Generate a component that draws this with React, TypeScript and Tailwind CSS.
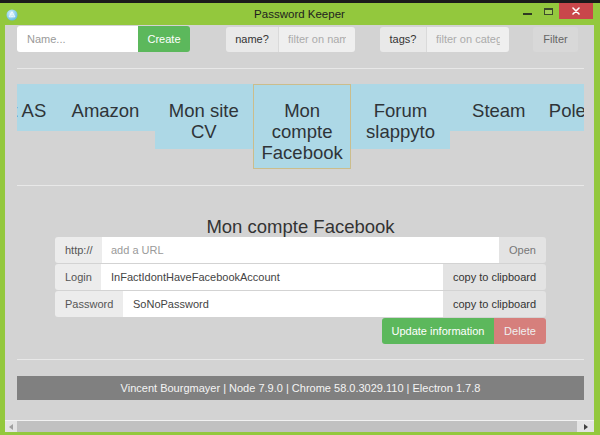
import React from 'react';

const tabs = ['Crédit AS', 'Amazon', 'Mon site CV', 'Mon compte Facebook', 'Forum slappyto', 'Steam', 'Pole emploi'];
const selected = 'Mon compte Facebook';

const WindowIcon = () => (
  <svg width="12" height="12" viewBox="0 0 12 12">
    <defs>
      <radialGradient id="ico" cx="40%" cy="35%" r="70%">
        <stop offset="0%" stopColor="#d8f3ff" />
        <stop offset="100%" stopColor="#5fb8e0" />
      </radialGradient>
    </defs>
    <circle cx="6" cy="6" r="5.5" fill="url(#ico)" />
    <path d="M6 2.6 L8.9 7.8 L3.1 7.8 Z" fill="none" stroke="#ffffff" strokeWidth="0.9" opacity="0.85" />
    <circle cx="6" cy="6.2" r="1.2" fill="none" stroke="#ffffff" strokeWidth="0.7" opacity="0.85" />
  </svg>
);

export default function App() {
  return (
    <div className="w-[600px] h-[435px] flex flex-col bg-[#1b1b1b] font-['Liberation_Sans',Arial,sans-serif] overflow-hidden">
      <div className="h-[3px] shrink-0" />

      {/* window */}
      <div className="flex-1 flex flex-col bg-[#93c83d] pl-[5px] pr-[6px] pb-[3px] min-h-0">
        {/* title bar */}
        <div className="h-[22px] shrink-0 grid grid-cols-[1fr_auto_1fr] items-center">
          <div className="flex items-center pl-[1px] pt-[1px]">
            <WindowIcon />
          </div>
          <div className="text-[11.5px] text-[#1e1e1e] pt-[1px]">Password Keeper</div>
          <div className="flex items-start justify-end h-full pr-[1px]">
            <div className="w-[9px] h-[2px] bg-[#2f3a22] mt-[10px]" />
            <div className="w-[9px] h-[7px] border border-[#3d4a2c] border-t-2 bg-[#a3d155] mt-[5px] ml-[12px]" />
            <div className="w-[34px] h-[16px] bg-[#c9474b] ml-[6px] flex items-center justify-center">
              <svg width="8" height="8" viewBox="0 0 8 8">
                <path d="M1 1 L7 7 M7 1 L1 7" stroke="#ffffff" strokeWidth="1.6" strokeLinecap="round" />
              </svg>
            </div>
          </div>
        </div>

        {/* content */}
        <div className="flex-1 flex flex-col bg-[#d3d3d3] min-h-0">
          <div className="flex-1 overflow-hidden pl-[12px] pr-[10px] text-[11px]">
            {/* toolbar */}
            <div className="mt-[1px] h-[26px] flex items-stretch">
              <div className="w-[121px] bg-white rounded-l-[3px] flex items-center px-[10px] text-[#9a9a9a]">Name...</div>
              <div className="w-[52px] bg-[#5cb85c] rounded-r-[3px] flex items-center justify-center text-white">Create</div>

              <div className="ml-[36px] mt-[1px] flex">
                <div className="w-[52px] bg-[#e9e9e9] rounded-l-[3px] flex items-center justify-center text-[#333]">name?</div>
                <div className="w-[77px] bg-[#efefef] border-l border-[#dadada] rounded-r-[3px] flex items-center px-[9px] text-[#ababab]">
                  <div className="flex-1 overflow-hidden whitespace-nowrap">filter on name</div>
                </div>
              </div>

              <div className="ml-[25px] mt-[1px] flex">
                <div className="w-[46px] bg-[#e9e9e9] rounded-l-[3px] flex items-center justify-center text-[#333]">tags?</div>
                <div className="w-[83px] bg-[#efefef] border-l border-[#dadada] rounded-r-[3px] flex items-center px-[9px] text-[#ababab]">
                  <div className="flex-1 overflow-hidden whitespace-nowrap">filter on category</div>
                </div>
              </div>

              <div className="ml-[24px] mt-[1px] w-[45px] bg-[#d8d8d8] rounded-[3px] flex items-center justify-center text-[#666]">Filter</div>
            </div>

            <div className="mt-[16px] h-px bg-[#e8e8e8]" />

            {/* tabs */}
            <div className="mt-[15px] overflow-hidden">
              <div className="flex items-start ml-[-59px] text-[18.5px] leading-[21px] text-[#2f3438]">
                {tabs.map((t) => (
                  <div
                    key={t}
                    className={
                      t === selected
                        ? 'w-[98.33px] shrink-0 bg-[#add8e6] border border-[#cbbd8c] pt-[15px] pb-[5px] text-center'
                        : 'w-[98.33px] shrink-0 bg-[#add8e6] pt-[16px] pb-[7px] min-h-[47px] text-center flex justify-center'
                    }
                  >
                    <span>{t}</span>
                  </div>
                ))}
              </div>
            </div>

            <div className="mt-[16px] h-px bg-[#e8e8e8]" />

            {/* detail */}
            <div className="mt-[30px] text-center text-[18.5px] leading-[21px] text-[#333]">Mon compte Facebook</div>

            <div className="w-[491px] mx-auto flex flex-col gap-[1px]">
              <div className="h-[26px] flex">
                <div className="w-[47px] bg-[#ececec] rounded-l-[3px] flex items-center px-[10px] text-[#555]">http://</div>
                <div className="flex-1 bg-white flex items-center px-[9px] text-[#9a9a9a]">add a URL</div>
                <div className="w-[47px] bg-[#e3e3e3] rounded-r-[3px] flex items-center justify-center text-[#777]">Open</div>
              </div>
              <div className="h-[26px] flex">
                <div className="w-[46px] bg-[#ececec] rounded-l-[3px] flex items-center px-[10px] text-[#555]">Login</div>
                <div className="flex-1 bg-white flex items-center px-[10px] text-[#444]">InFactIdontHaveFacebookAccount</div>
                <div className="w-[103px] bg-[#e3e3e3] rounded-r-[3px] flex items-center justify-center text-[#333]">copy to clipboard</div>
              </div>
              <div className="h-[26px] flex">
                <div className="w-[68px] bg-[#ececec] rounded-l-[3px] flex items-center px-[10px] text-[#555]">Password</div>
                <div className="flex-1 bg-white flex items-center px-[10px] text-[#444]">SoNoPassword</div>
                <div className="w-[103px] bg-[#e3e3e3] rounded-r-[3px] flex items-center justify-center text-[#333]">copy to clipboard</div>
              </div>
              <div className="h-[26px] flex justify-end">
                <div className="w-[112px] bg-[#5cb85c] rounded-l-[3px] flex items-center justify-center text-white">Update information</div>
                <div className="w-[52px] bg-[#d9534f] opacity-65 rounded-r-[3px] flex items-center justify-center text-white">Delete</div>
              </div>
            </div>

            <div className="mt-[15px] h-px bg-[#e8e8e8]" />

            <div className="mt-[16px] h-[24px] bg-[#808080] flex items-center justify-center text-[#f4f4f4]">
              Vincent Bourgmayer | Node 7.9.0 | Chrome 58.0.3029.110 | Electron 1.7.8
            </div>
          </div>

          {/* horizontal scrollbar */}
          <div className="h-[12px] shrink-0 border-t border-[#f2f2f2] flex">
            <div className="w-[12px] bg-[#e4e4e4] flex items-center justify-center">
              <svg width="4" height="6" viewBox="0 0 4 6"><path d="M4 0 L0 3 L4 6 Z" fill="#a0a0a0" /></svg>
            </div>
            <div className="flex-1 bg-[#c1c1c1]" />
            <div className="w-[17px] bg-[#e4e4e4] flex items-center justify-center">
              <svg width="4" height="6" viewBox="0 0 4 6"><path d="M0 0 L4 3 L0 6 Z" fill="#404040" /></svg>
            </div>
          </div>
        </div>
      </div>
    </div>
  );
}
